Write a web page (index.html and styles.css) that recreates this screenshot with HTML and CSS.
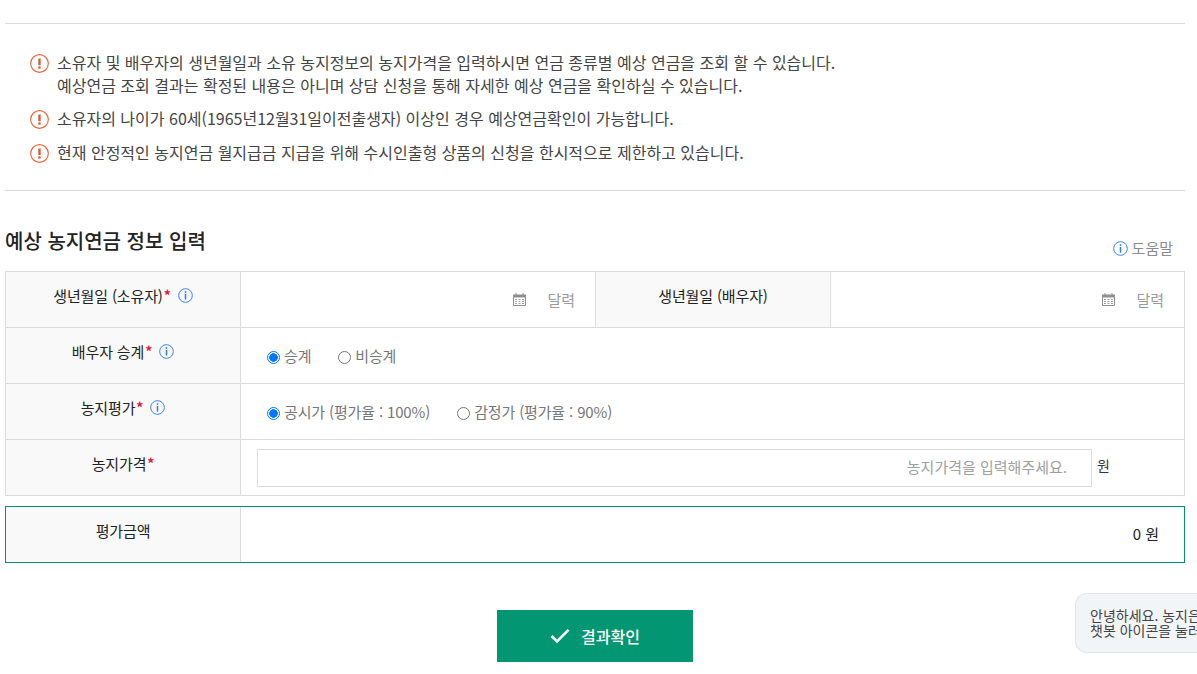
FILE: index.html
```html
<!DOCTYPE html>
<html lang="ko">
<head>
<meta charset="utf-8">
<title>예상 농지연금 정보 입력</title>
<link rel="stylesheet" href="styles.css">
</head>
<body>
<svg class="defs" width="0" height="0" aria-hidden="true">
  <symbol id="info" viewBox="0 0 16 16">
    <circle cx="8" cy="8" r="7.300" fill="none" stroke="#2f7df0" stroke-width="1"/>
    <rect x="7.200" y="3.400" width="1.600" height="1.800" fill="#2f7df0"/>
    <rect x="7.200" y="6.400" width="1.600" height="6" fill="#2f7df0"/>
  </symbol>
  <symbol id="warn" viewBox="0 0 20 20">
    <circle cx="10" cy="10" r="9.300" fill="none" stroke="#e8683c" stroke-width="1.200"/>
    <rect x="8.800" y="4.800" width="2.400" height="7" fill="#e0502a"/>
    <rect x="8.800" y="13" width="2.400" height="2.400" fill="#e0502a"/>
  </symbol>
  <symbol id="cal" viewBox="0 0 13 13">
    <path d="M0.500 2.500h12v10h-12z" fill="none" stroke="#8f8f8f"/>
    <path d="M0 1.500h13v3H0z" fill="#8f8f8f"/>
    <path d="M3 0v2M10 0v2" stroke="#8f8f8f"/>
    <path d="M2 6.500h2M5.500 6.500h2M9 6.500h2M2 8.500h2M5.500 8.500h2M9 8.500h2M2 10.500h2M5.500 10.500h2M9 10.500h2" stroke="#a0a0a0"/>
  </symbol>
</svg>

<main class="page">
  <section class="notices">
    <ul class="notice-list">
      <li class="notice"><svg class="warn"><use href="#warn"/></svg><p>소유자 및 배우자의 생년월일과 소유 농지정보의 농지가격을 입력하시면 연금 종류별 예상 연금을 조회 할 수 있습니다.<br>예상연금 조회 결과는 확정된 내용은 아니며 상담 신청을 통해 자세한 예상 연금을 확인하실 수 있습니다.</p></li>
      <li class="notice"><svg class="warn"><use href="#warn"/></svg><p>소유자의 나이가 60세(1965년12월31일이전출생자) 이상인 경우 예상연금확인이 가능합니다.</p></li>
      <li class="notice"><svg class="warn"><use href="#warn"/></svg><p>현재 안정적인 농지연금 월지급금 지급을 위해 수시인출형 상품의 신청을 한시적으로 제한하고 있습니다.</p></li>
    </ul>
  </section>

  <div class="title-row">
    <h2 class="title">예상 농지연금 정보 입력</h2>
    <a class="help"><svg class="info-help"><use href="#info"/></svg>도움말</a>
  </div>

  <div class="form-table">
    <div class="row">
      <div class="th">생년월일 (소유자)<span class="req">*</span><svg class="info"><use href="#info"/></svg></div>
      <div class="td td-date td-date-a"><svg class="cal"><use href="#cal"/></svg><span class="cal-text">달력</span></div>
      <div class="th th-b">생년월일 (배우자)</div>
      <div class="td td-date td-date-b"><svg class="cal"><use href="#cal"/></svg><span class="cal-text">달력</span></div>
    </div>
    <div class="row">
      <div class="th">배우자 승계<span class="req">*</span><svg class="info"><use href="#info"/></svg></div>
      <div class="td td-radio">
        <label class="radio"><span class="dot on"></span>승계</label>
        <label class="radio"><span class="dot"></span>비승계</label>
      </div>
    </div>
    <div class="row">
      <div class="th">농지평가<span class="req">*</span><svg class="info"><use href="#info"/></svg></div>
      <div class="td td-radio">
        <label class="radio"><span class="dot on"></span>공시가 (평가율 : 100%)</label>
        <label class="radio"><span class="dot"></span>감정가 (평가율 : 90%)</label>
      </div>
    </div>
    <div class="row">
      <div class="th">농지가격<span class="req">*</span></div>
      <div class="td td-input">
        <div class="input">농지가격을 입력해주세요.</div><span class="unit">원</span>
      </div>
    </div>
  </div>

  <div class="total">
    <div class="th th-total">평가금액</div>
    <div class="td td-total">0 원</div>
  </div>

  <div class="actions">
    <button class="submit" type="button">
      <svg class="check" viewBox="0 0 20 16"><path d="M1.500 8l5.500 5.500L18.500 1.800" fill="none" stroke="#fff" stroke-width="2.600"/></svg>결과확인
    </button>
  </div>
</main>

<aside class="bubble">안녕하세요. 농지은행 챗봇입니다.<br>챗봇 아이콘을 눌러 대화를 시작하세요.</aside>
</body>
</html>
```

FILE: styles.css
```css
* { box-sizing: border-box; }
html, body { margin: 0; padding: 0; height: 674px; overflow: hidden; background: #fff; }
body {
  font-family: "Noto Sans CJK KR", "Noto Sans", sans-serif;
  font-size: 15px;
  color: #333;
  position: relative;
}
.defs { display: block; height: 0; }
.page { width: 1180px; margin-left: 5px; padding-top: 23px; }

.notices {
  border-top: 1px solid #dcdcdc;
  border-bottom: 1px solid #d8d8dc;
  height: 168px;
  padding: 27px 0 0 25px;
}
.notice-list { list-style: none; margin: 0; padding: 0; display: flex; flex-direction: column; gap: 11px; }
.notice { display: flex; align-items: flex-start; gap: 8px; }
.notice:first-child { margin-bottom: -1px; }
.notice p { margin: 0; font-size: 16px; line-height: 23px; color: #444; }
.warn { width: 19px; height: 19px; flex: none; margin-top: 3px; }

.title-row { height: 80px; display: flex; justify-content: space-between; align-items: flex-start; padding-top: 37px; }
.title { margin: 0; font-size: 20px; line-height: 26px; font-weight: 500; color: #222; }
.help { display: flex; align-items: center; gap: 4px; color: #8c8c8c; font-size: 15px; line-height: 20px; margin: 10px 12px 0 0; }
.info-help { width: 15px; height: 15px; }

.form-table { border: 1px solid #dcdcdc; border-bottom: 0; }
.row { display: flex; height: 56px; border-bottom: 1px solid #dcdcdc; }
.th {
  width: 235px;
  flex: none;
  background: #f9f9f9;
  border-right: 1px solid #dcdcdc;
  display: flex;
  justify-content: center;
  padding-top: 13px;
  font-size: 15px;
  line-height: 22px;
  letter-spacing: -0.15px;
  color: #222;
}
.th-b { border-left: 1px solid #dcdcdc; width: 236px; }
.req { color: #f01030; font-size: 14px; line-height: 20px; font-weight: 700; margin-left: 1px; }
.info { width: 15px; height: 15px; margin: 3px 0 0 7px; }

.td { flex: 1; display: flex; align-items: center; min-width: 0; }
.td-date { justify-content: flex-end; flex: none; padding-bottom: 1px; }
.td-date-a { width: 354px; padding-right: 20px; }
.td-date-b { flex: 1; padding-right: 20px; }
.cal { width: 13px; height: 13px; margin-right: 21px; }
.cal-text { font-size: 15px; color: #9a9a9a; }

.td-radio { padding: 0 0 0 26px; gap: 27px; color: #777; font-size: 15px; letter-spacing: -0.15px; }
.radio { display: flex; align-items: center; gap: 4px; }
.dot { width: 13px; height: 13px; margin-top: 3px; border: 1px solid #767676; border-radius: 50%; background: #fff; }
.dot.on { border-color: #0075ff; background: radial-gradient(circle, #0075ff 0 4px, #fff 4.500px); }

.td-input { padding-left: 16px; gap: 5px; }
.input {
  width: 835px;
  height: 38px;
  border: 1px solid #dcdcdc;
  padding: 0 24px 2px 0;
  display: flex;
  align-items: center;
  justify-content: flex-end;
  color: #a0a0a0;
  font-size: 15px;
}
.unit { color: #333; font-size: 14px; margin: -6px 0 0 0; }

.total { display: flex; height: 57px; margin-top: 10px; border: 1px solid #00916e; }
.th-total { height: 55px; }
.td-total { justify-content: flex-end; padding: 0 25px 2px 0; color: #222; font-size: 15px; }

.actions { display: flex; justify-content: center; margin-top: 47px; }
.submit {
  width: 196px;
  height: 52px;
  border: 0;
  background: #029672;
  color: #fff;
  font: 500 16px/20px "Noto Sans CJK KR", sans-serif;
  display: flex;
  align-items: center;
  justify-content: center;
  gap: 11px;
}
.check { width: 20px; height: 16px; }

.bubble {
  position: absolute;
  left: 1075px;
  top: 593px;
  width: 122px;
  height: 60px;
  overflow: hidden;
  background: #f2f5f8;
  border: 1px solid #e2e5e9;
  border-right: 0;
  border-radius: 12px 0 0 12px;
  padding: 14px 0 0 14px;
  font-size: 14px;
  line-height: 15px;
  color: #444;
  white-space: nowrap;
}
```
